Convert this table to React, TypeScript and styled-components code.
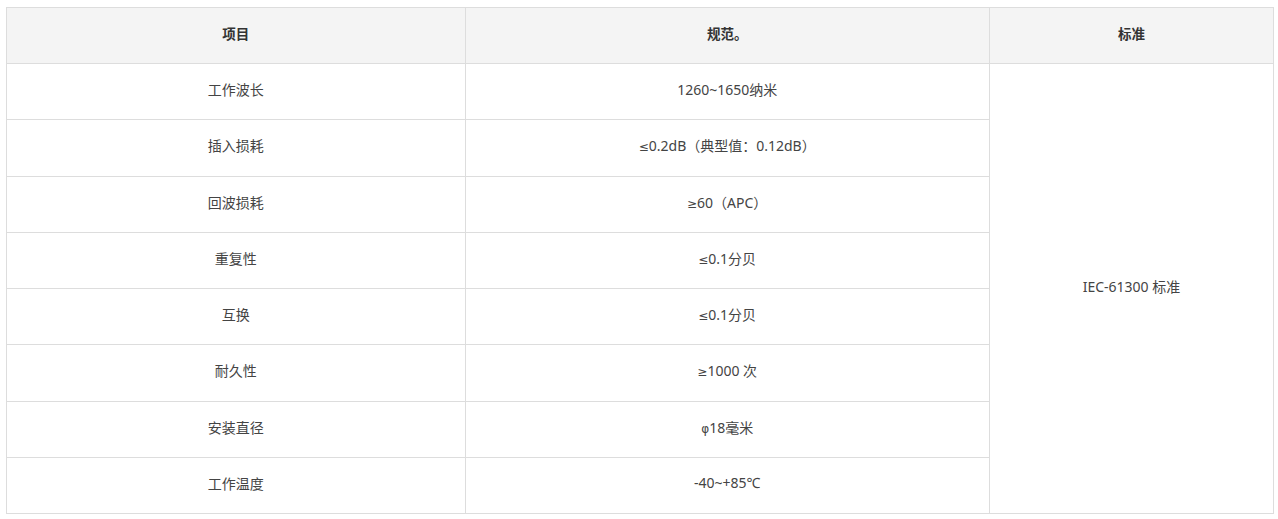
import React from 'react';
import styled, { createGlobalStyle } from 'styled-components';

const GlobalStyle = createGlobalStyle`
  html, body {
    margin: 0;
    padding: 0;
    background: #fff;
  }
`;

const Page = styled.div`
  padding: 7px 4px 0 6px;
`;

const Table = styled.table`
  width: 1268px;
  border-collapse: collapse;
  table-layout: fixed;
  font-family: "Noto Sans", "Noto Sans CJK SC", sans-serif;
  font-size: 14px;
  color: #333;
  border: 1px solid #ddd;
`;

const Row = styled.tr`
  height: 56.25px;
`;

const HeadCell = styled.th<{ $width: string }>`
  width: ${({ $width }) => $width};
  height: 50px;
  background: #f4f4f4;
  border: 1px solid #ddd;
  font-weight: 700;
  font-size: 13.5px;
  text-align: center;
  vertical-align: middle;
  padding: 0 0 5px;
`;

const Cell = styled.td`
  border: 1px solid #ddd;
  text-align: center;
  vertical-align: middle;
  padding: 0 0 5px;
  color: #444;
`;

const Sym = styled.span`
  font-family: "DejaVu Sans", sans-serif;
  font-size: 12px;
`;

const rows: [string, React.ReactNode][] = [
  ['工作波长', '1260~1650纳米'],
  ['插入损耗', <><Sym>≤</Sym>0.2dB（典型值：0.12dB）</>],
  ['回波损耗', <><Sym>≥</Sym>60（APC）</>],
  ['重复性', <><Sym>≤</Sym>0.1分贝</>],
  ['互换', <><Sym>≤</Sym>0.1分贝</>],
  ['耐久性', <><Sym>≥</Sym>1000 次</>],
  ['安装直径', <><Sym>φ</Sym>18毫米</>],
  ['工作温度', '-40~+85℃'],
];

export default function App () {
  return (
    <Page>
      <GlobalStyle />
      <Table>
        <thead>
          <tr>
            <HeadCell $width='36.2%'>项目</HeadCell>
            <HeadCell $width='41.4%'>规范。</HeadCell>
            <HeadCell $width='22.4%'>标准</HeadCell>
          </tr>
        </thead>
        <tbody>
          {rows.map(([item, spec], i) => (
            <Row key={item}>
              <Cell>{item}</Cell>
              <Cell>{spec}</Cell>
              {i === 0 && <Cell rowSpan={rows.length}>IEC-61300 标准</Cell>}
            </Row>
          ))}
        </tbody>
      </Table>
    </Page>
  );
}
